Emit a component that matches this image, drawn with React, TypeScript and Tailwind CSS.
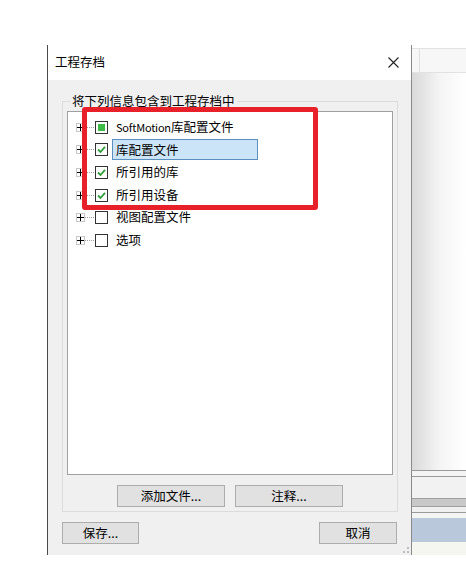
import React from 'react';

type Item = { label: React.ReactNode; state: 'partial' | 'checked' | 'none'; selected?: boolean };

const items: Item[] = [
  {
    label: (
      <>
        <span className="text-[11px] tracking-[-0.2px]">SoftMotion</span>库配置文件
      </>
    ),
    state: 'partial',
  },
  { label: '库配置文件', state: 'checked', selected: true },
  { label: '所引用的库', state: 'checked' },
  { label: '所引用设备', state: 'checked' },
  { label: '视图配置文件', state: 'none' },
  { label: '选项', state: 'none' },
];

const Expander = () => (
  <div className="flex items-center w-[19px]">
    <div className="w-[9px] h-[9px] border border-[#c8c8c8] bg-white flex items-center justify-center relative">
      <div className="absolute w-[7px] h-[1px] bg-black" />
      <div className="absolute w-[1px] h-[7px] bg-black" />
    </div>
    <div className="w-[9px] border-t border-dotted border-[#a0a0a0]" />
  </div>
);

const CheckBox = ({ state }: { state: Item['state'] }) => (
  <div className="w-[13px] h-[13px] shrink-0 border border-[#333] bg-white flex items-center justify-center">
    {state === 'partial' && <div className="w-[7px] h-[7px] bg-[#3dbb47]" />}
    {state === 'checked' && (
      <svg width="11" height="11" viewBox="0 0 11 11">
        <path d="M2 5.5 L4.5 8 L9 2.8" fill="none" stroke="#2f9e3a" strokeWidth="1.8" />
      </svg>
    )}
  </div>
);

const Btn = ({ children, w }: { children: React.ReactNode; w: string }) => (
  <div
    className={`${w} h-[22px] bg-[#e1e1e1] border border-[#adadad] flex items-center justify-center text-[12.5px] text-black`}
  >
    {children}
  </div>
);

export default function App() {
  return (
    <div
      className="w-[466px] h-[563px] bg-white flex pt-[45px] overflow-hidden relative"
      style={{ fontFamily: '"Noto Sans CJK SC", "Noto Sans", sans-serif' }}
    >
      <div className="w-[47px]" />
      {/* dialog */}
      <div className="w-[364px] h-[510px] border-l border-[#4a4a4a] flex flex-col relative">
        <div className="h-[35px] bg-white flex items-center justify-between pl-[7px] pr-[12px]">
          <span className="text-[12.5px] text-black">工程存档</span>
          <svg width="11" height="11" viewBox="0 0 11 11">
            <path d="M0.5 0.5 L10.5 10.5 M10.5 0.5 L0.5 10.5" stroke="#222" strokeWidth="1.1" />
          </svg>
        </div>
        <div className="flex-1 bg-[#f0f0f0] flex flex-col pl-[14px] pr-[13px] pt-[14px]">
          <fieldset className="border border-[#dcdcdc] h-[418px] flex flex-col px-[4px] pb-[5px]">
            <legend className="ml-[3px] px-[2px] text-[12.5px] leading-[14px] text-black">
              将下列信息包含到工程存档中
            </legend>
            <div className="mt-[3px] h-[364px] bg-white border border-[#a0a0a0] pt-[4px] pl-[8px]">
              {items.map((it, i) => (
                <div key={i} className="h-[22.6px] flex items-center text-[12.5px] text-black">
                  <Expander />
                  <CheckBox state={it.state} />
                  <div
                    className={`ml-[4px] h-[21px] flex items-center pl-[3px] border ${
                      it.selected ? 'w-[146px] bg-[#cce4f7] border-[#5a8fc0]' : 'border-transparent'
                    }`}
                  >
                    {it.label}
                  </div>
                </div>
              ))}
            </div>
            <div className="flex justify-center gap-[10px] mt-[10px]">
              <Btn w="w-[108px]">添加文件...</Btn>
              <Btn w="w-[108px]">注释...</Btn>
            </div>
          </fieldset>
          <div className="flex justify-between mt-[10px] pr-[1px]">
            <Btn w="w-[77px]">保存...</Btn>
            <Btn w="w-[78px]">取消</Btn>
          </div>
        </div>
        <div className="absolute right-[2px] bottom-[2px] w-[6px] h-[6px] border-r-2 border-b-2 border-dotted border-[#bdbdbd]" />
      </div>
      {/* background window */}
      <div className="flex-1 h-[510px] border-l border-[#8a8a8a] flex flex-col">
        <div className="h-[3px]" />
        <div className="h-[25px] flex border-y border-[#e2e2e2] bg-[#f7f7f7]">
          <div className="w-[8px] border-r border-[#dedede]" />
          <div className="flex-1" />
        </div>
        <div className="flex-1 bg-gradient-to-r from-[#d9d9d9] via-[#f4f4f4] to-white" />
        <div className="h-[7px] border-y border-[#9a9a9a] bg-[#f4f4f4]" />
        <div className="h-[21px] bg-[#f2f2f2]" />
        <div className="h-[9px] border-y border-[#a0a0a0] bg-[#c8c8c8]" />
        <div className="h-[6px] border-b border-[#9a9a9a] bg-[#f0f0f0]" />
        <div className="h-[5px] bg-[#f4f4f4]" />
        <div className="h-[24px] bg-[#b9c8da]" />
        <div className="h-[13px] bg-[#f6f6f0]" />
      </div>
      {/* annotation frame */}
      <div className="absolute left-[82px] top-[107px] w-[236px] h-[103px] border-[5px] border-[#e8202a] rounded-[3px]" />
    </div>
  );
}
